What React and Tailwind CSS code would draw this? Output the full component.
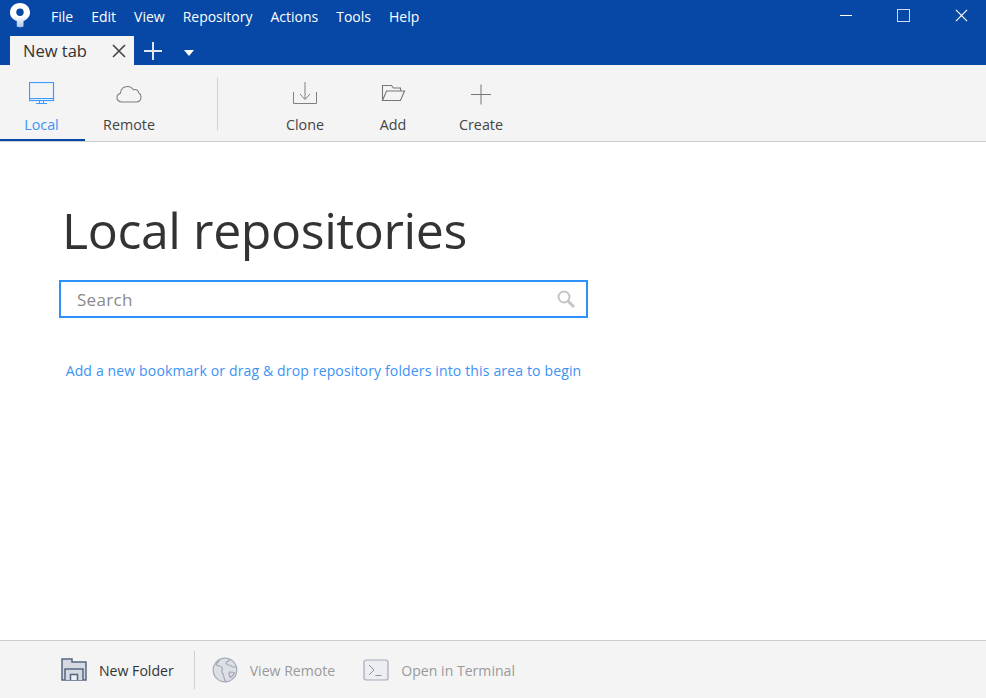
import React from 'react';

const font = { fontFamily: '"Open Sans", "Noto Sans", sans-serif' };

const Logo = () => (
  <svg width="20" height="25" viewBox="0 0 20 25">
    <defs>
      <linearGradient id="stem" x1="0" y1="0" x2="0" y2="1">
        <stop offset="0.55" stopColor="#ffffff" />
        <stop offset="1" stopColor="#a9c4ea" />
      </linearGradient>
    </defs>
    <path d="M10 0C4.400 0 0 4 0 9.500c0 3.800 2.500 7 6.800 8.600V23.500c1.200 1 5.400 1 6.700 0V18.100C17.500 16.500 20 13.300 20 9.500 20 4 15.600 0 10 0z" fill="url(#stem)" />
    <circle cx="10" cy="9.200" r="3.700" fill="#0747a6" />
  </svg>
);

const LocalIcon = () => (
  <svg width="26" height="24" viewBox="0 0 26 24" fill="none" stroke="#3b9bff" strokeWidth="1">
    <rect x="0.500" y="0.500" width="24" height="18" strokeWidth="1.200" />
    <path d="M0.500 16.500h24M7 21.500h11M10.500 19v2.500M14.500 19v2.500" />
  </svg>
);

const CloudIcon = () => (
  <svg width="26" height="20" viewBox="0 0 26 20" fill="none" stroke="#808080" strokeWidth="1.100">
    <path d="M6 18c-3 0-5-1.800-5-4.400 0-2.100 1.400-3.700 3.300-4.200C4.900 5.300 7.600 2.500 11.500 2.500c2.700 0 4.700 1.300 5.900 3.300 .5-.2 1-.3 1.500-.3 2 0 3.400 1.300 3.700 3.200 1.500 .7 2.400 2.300 2.400 4.100 0 3-1.900 5.200-4.700 5.200z" />
  </svg>
);

const CloneIcon = () => (
  <svg width="24" height="26" viewBox="0 0 24 26" fill="none" stroke="#808080" strokeWidth="1">
    <path d="M0.500 11v11.500h23V11M12 1v17M7 13l5 5.500 5-5.500" />
  </svg>
);

const AddIcon = () => (
  <svg width="26" height="26" viewBox="0 0 26 26" fill="none" stroke="#777" strokeWidth="1.100">
    <path d="M2.500 19.500v-15h9l2 2.500h7v3M2.500 19.500l4-9.500h18l-4 9.500z" />
  </svg>
);

const PlusIcon = () => (
  <svg width="26" height="26" viewBox="0 0 26 26" fill="none" stroke="#777" strokeWidth="1">
    <path d="M13 3.500v20M3 13.500h20" />
  </svg>
);

const ToolItem = ({ icon, label, className }) => (
  <div className={`flex flex-col items-center ${className}`}>
    <div className="h-[26px] mt-[16px] flex items-center justify-center">{icon}</div>
    <span className="mt-[8px] text-[14.300px] leading-[20px] text-[#444]">{label}</span>
  </div>
);

const FolderIcon = () => (
  <svg width="26" height="23" viewBox="0 0 26 23">
    <path d="M1 1h10v3h14v18H1z" fill="#d5d9e2" stroke="#56657f" strokeWidth="1.500" />
    <path d="M4 22v-11h18v11" fill="#d5d9e2" stroke="#56657f" strokeWidth="1.500" />
    <path d="M9.500 22v-5.500h7V22" fill="#eef0f4" stroke="#56657f" strokeWidth="1.500" />
  </svg>
);

const GlobeIcon = () => (
  <svg width="26" height="26" viewBox="0 0 26 26" fill="#dcdfe6" stroke="#a3a9b5" strokeWidth="1.200">
    <circle cx="13" cy="13" r="11.800" />
    <path d="M8 2.500c-1 2-3 3-4 5 2 2 5 1 6 3s-1 3 0 5c1 1 2 2 2 5 0 2 1 3 2 4M18 2.500c-1 2-4 2-4 4 1 2 4 1 6 3l4.500 1M17.500 15c2 0 4 0 5 1-1 2-2 3-4 4.500-1-1-2-3-1-5.500z" fill="none" />
  </svg>
);

const TerminalIcon = () => (
  <svg width="26" height="22" viewBox="0 0 26 22" fill="#edeef2" stroke="#a3a9b5" strokeWidth="1.200">
    <rect x="1" y="1" width="24" height="20" rx="2" />
    <path d="M6 6l5 5-5 5M12.500 16.500h6" fill="none" stroke="#8a91a0" strokeWidth="1" />
  </svg>
);

const App = () => (
  <div className="w-[986px] h-[698px] flex flex-col bg-white overflow-hidden" style={font}>
    {/* Title bar */}
    <div className="h-[65px] bg-[#0747a6] flex flex-col shrink-0">
      <div className="h-[36px] flex items-start">
        <div className="ml-[10px] mt-[3px] w-[20px]"><Logo /></div>
        <div className="ml-[21px] mt-[7px] flex gap-[18px] text-[14px] leading-[20px] text-white">
          <span>File</span>
          <span>Edit</span>
          <span>View</span>
          <span>Repository</span>
          <span>Actions</span>
          <span>Tools</span>
          <span>Help</span>
        </div>
        <div className="ml-auto flex items-center text-white">
          <div className="w-[54px] h-[30px] flex items-center justify-center pr-[6px]">
            <div className="w-[12px] h-px bg-white" />
          </div>
          <div className="w-[60px] h-[30px] flex items-center justify-center pr-[6px]">
            <div className="w-[13px] h-[13px] border border-[#cfdcf0]" />
          </div>
          <div className="w-[50px] h-[30px] flex items-center justify-center">
            <svg width="13" height="13" viewBox="0 0 14 14" stroke="#fff" strokeWidth="1.300"><path d="M1 1l12 12M13 1L1 13" /></svg>
          </div>
        </div>
      </div>
      <div className="flex-1 flex items-stretch pl-[10px]">
        <div className="w-[124px] bg-[#f4f4f4] flex items-center pl-[13px] pr-[8px]">
          <span className="text-[16.500px] leading-[20px] text-[#333]">New tab</span>
          <svg className="ml-auto" width="14" height="14" viewBox="0 0 14 14" stroke="#444" strokeWidth="1.600"><path d="M1 1l12 12M13 1L1 13" /></svg>
        </div>
        <svg className="ml-[10px] mt-[6px]" width="18" height="18" viewBox="0 0 18 18" stroke="#dfe6f2" strokeWidth="2"><path d="M9 0v18M0 9h18" /></svg>
        <svg className="ml-[22px] mt-[14px]" width="10" height="6" viewBox="0 0 10 6" fill="#fff"><path d="M0 0h10L5 6z" /></svg>
      </div>
    </div>

    {/* Toolbar */}
    <div className="h-[77px] shrink-0 bg-[#f4f4f4] border-b border-[#cccccc] flex">
      <ToolItem icon={<LocalIcon />} label={<span className="text-[#3b93f5]">Local</span>} className="w-[85px] pr-[2px] h-[76px] border-b-2 border-[#0747a6]" />
      <ToolItem icon={<CloudIcon />} label="Remote" className="w-[88px]" />
      <div className="ml-[44px] mt-[13px] w-px h-[52px] bg-[#d0d0d0]" />
      <ToolItem icon={<CloneIcon />} label="Clone" className="w-[88px] ml-[43px]" />
      <ToolItem icon={<AddIcon />} label="Add" className="w-[88px]" />
      <ToolItem icon={<PlusIcon />} label="Create" className="w-[88px]" />
    </div>

    {/* Main */}
    <div className="flex-1 flex flex-col pl-[59px]">
      <h1 className="mt-[53px] ml-[3px] text-[50px] leading-[70px] text-[#333] tracking-[-0.4px]">Local repositories</h1>
      <div className="mt-[15px] w-[529px] h-[38px] border-2 border-[#2e90fa] flex items-center pl-[16px] pr-[10px]">
        <span className="text-[17px] text-[#8a8a8a] tracking-[0.3px] pt-[1px]">Search</span>
        <svg className="ml-auto" width="20" height="20" viewBox="0 0 20 20" fill="none" stroke="#c4c4c4">
          <circle cx="8" cy="8" r="5.500" strokeWidth="2" />
          <path d="M12 12l6 6" strokeWidth="3" />
        </svg>
      </div>
      <div className="mt-[43px] w-[529px] text-center text-[14px] leading-[20px] text-[#3b93f5] tracking-[0.15px]">
        Add a new bookmark or drag &amp; drop repository folders into this area to begin
      </div>
    </div>

    {/* Footer */}
    <div className="h-[58px] shrink-0 bg-[#f4f4f4] border-t border-[#cccccc] flex items-center pl-[61px] text-[14.100px]">
      <FolderIcon />
      <span className="ml-[12px] text-[#333] pt-[2px]">New Folder</span>
      <div className="ml-[20px] w-px h-[38px] bg-[#d0d0d0]" />
      <div className="ml-[17px]"><GlobeIcon /></div>
      <span className="ml-[12px] text-[#9a9a9a] pt-[2px]">View Remote</span>
      <div className="ml-[28px]"><TerminalIcon /></div>
      <span className="ml-[12px] text-[#9a9a9a] pt-[2px]">Open in Terminal</span>
    </div>
  </div>
);

export default App;
